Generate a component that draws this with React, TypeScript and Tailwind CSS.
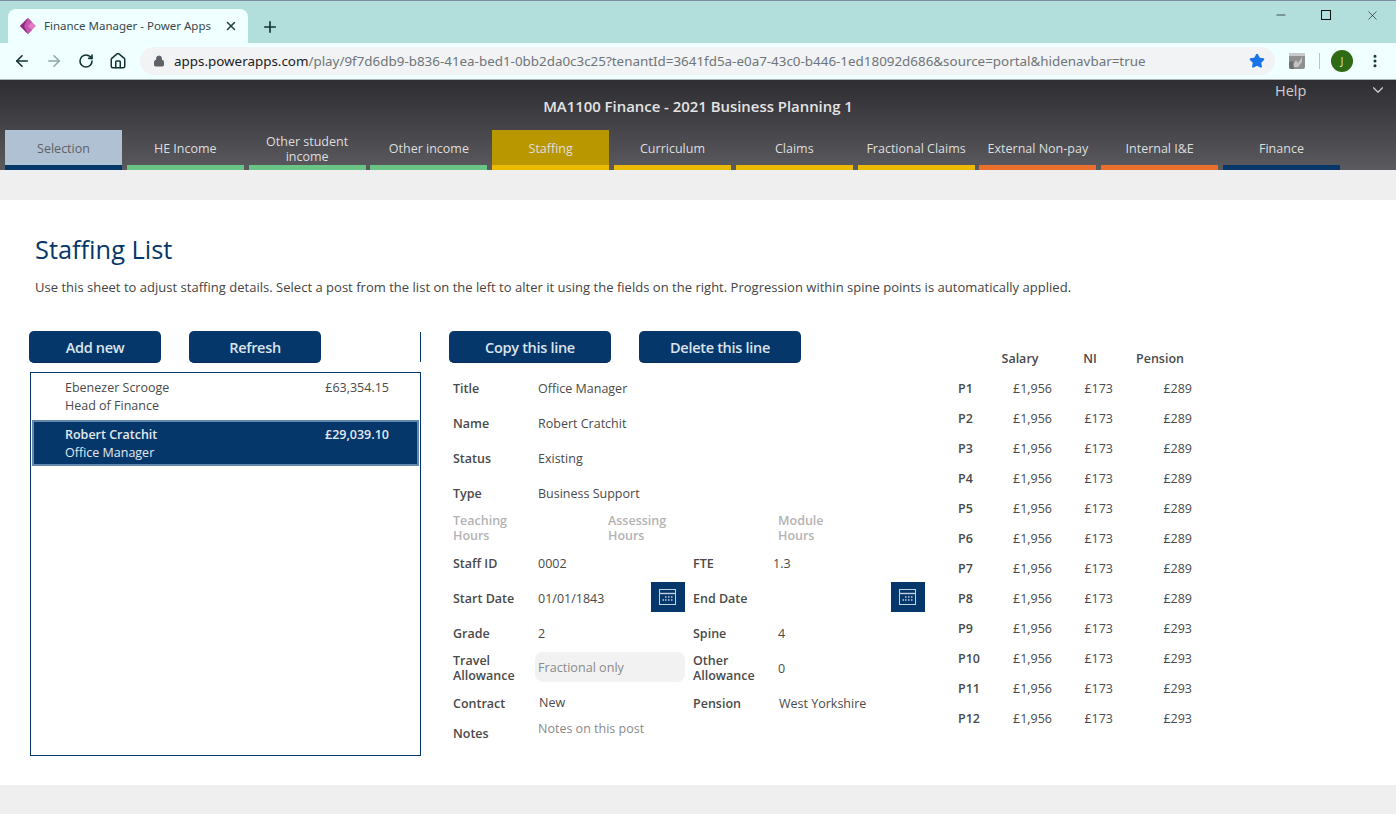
import { ArrowLeft, ArrowRight, ChevronDown, Home, Lock, Minus, MoreVertical, Plus, RotateCw, Star, X } from 'lucide-react';

const tabs = [
  { label: 'Selection', bg: 'bg-[#b0c1d3]', bar: 'bg-[#06376a]', text: 'text-[#5d6266]' },
  { label: 'HE Income', bar: 'bg-[#68c585]' },
  { label: 'Other student income', bar: 'bg-[#68c585]' },
  { label: 'Other income', bar: 'bg-[#68c585]' },
  { label: 'Staffing', bg: 'bg-[#b99700]', bar: 'bg-[#eabb00]' },
  { label: 'Curriculum', bar: 'bg-[#eabb00]' },
  { label: 'Claims', bar: 'bg-[#eabb00]' },
  { label: 'Fractional Claims', bar: 'bg-[#eabb00]' },
  { label: 'External Non-pay', bar: 'bg-[#ea6f2d]' },
  { label: 'Internal I&E', bar: 'bg-[#ea6f2d]' },
  { label: 'Finance', bar: 'bg-[#06376a]' },
];

const months = [
  ['P1', '£289'], ['P2', '£289'], ['P3', '£289'], ['P4', '£289'],
  ['P5', '£289'], ['P6', '£289'], ['P7', '£289'], ['P8', '£289'],
  ['P9', '£293'], ['P10', '£293'], ['P11', '£293'], ['P12', '£293'],
];

function PowerAppsLogo() {
  return (
    <svg width="18" height="18" viewBox="0 0 18 18">
      <path d="M9 1 L17 9 L9 17 L5 13 L9 9 L5 5 Z" fill="#e47cc6" />
      <path d="M9 1 L13 5 L9 9 L13 13 L9 17 L1 9 Z" fill="#c257ab" />
      <path d="M9 1 L1 9 L9 17 L5 9 Z" fill="#8a2a80" />
    </svg>
  );
}

function ExtensionIcon() {
  return (
    <svg width="16" height="16" viewBox="0 0 16 16" className="rounded-[2px]">
      <rect width="16" height="16" fill="#8f8f8f" />
      <rect width="16" height="3" fill="#c9c9c9" />
      <path d="M3 14 L7 7 L9 10 L13 4 L13 9 L9 14 Z" fill="#c4c4c4" />
      <path d="M0 9 L4 8 L5 16 L0 16 Z" fill="#6f6f6f" />
    </svg>
  );
}

function CalendarButton() {
  return (
    <div className="w-[34px] h-[30px] bg-[#06376a] flex items-center justify-center">
      <svg width="18" height="16" viewBox="0 0 18 16" fill="none" stroke="#c4d2e0">
        <rect x="0.5" y="0.5" width="16" height="15" />
        <path d="M0.5 4.5 H16.5" strokeWidth="1.4" />
        <path d="M6 8 h1.5 M9 8 h1.5 M12 8 h1.5 M3.5 11 h1.5 M6 11 h1.5 M9 11 h1.5 M12 11 h1.5" strokeWidth="1.4" />
      </svg>
    </div>
  );
}

function ActionButton({ label, wide }: { label: string; wide?: boolean }) {
  return (
    <button className={`${wide ? 'w-[162px]' : 'w-[132px]'} h-8 pt-[2px] rounded-[5px] bg-[#06376a] border-b border-[#042c56] text-[#dbe3ec] text-[14.5px] font-semibold tracking-[-0.3px]`}>
      {label}
    </button>
  );
}

function Label({ children }: { children: React.ReactNode }) {
  return <div className="text-[12.5px] leading-[15px] font-semibold text-[#4a4a4a]">{children}</div>;
}

function Value({ children, className = '' }: { children: React.ReactNode; className?: string }) {
  return <div className={`text-[12.5px] leading-[15px] text-[#4a4a4a] ${className}`}>{children}</div>;
}

function FormRow({ children, className = 'h-[35px]' }: { children: React.ReactNode; className?: string }) {
  return <div className={`grid grid-cols-[85px_155px_85px_1fr] items-center ${className}`}>{children}</div>;
}

export default function App() {
  return (
    <div className="w-[1396px] h-[814px] overflow-hidden bg-[#efefef] font-['Open_Sans','Noto_Sans',sans-serif]">
      {/* browser chrome */}
      <div className="h-[43px] bg-[#b2dfdc] border-t border-[#7f8fa0] flex items-end pl-2">
        <div className="w-[240px] h-[34px] bg-[#f0ffff] rounded-t-lg flex items-center pl-[11px] pr-[10px]">
          <PowerAppsLogo />
          <span className="ml-[7px] flex-1 text-[11.5px] text-[#38484a] font-['Noto_Sans',sans-serif] whitespace-nowrap">Finance Manager - Power Apps</span>
          <X size={14} strokeWidth={2.5} className="text-[#20403f]" />
        </div>
        <Plus size={18} strokeWidth={2.2} className="ml-[13px] mb-[7px] text-[#123534]" />
        <div className="ml-auto flex items-center h-[28px] self-start text-[#111]">
          <Minus size={14} strokeWidth={1.2} className="mr-[33px]" />
          <div className="w-[10px] h-[10px] border border-[#111] mr-[34px]" />
          <X size={15} strokeWidth={1} className="mr-[16px]" />
        </div>
      </div>
      <div className="h-[37px] bg-[#f0ffff] border-b border-[#aab5b5] flex items-center pl-[13px]">
        <ArrowLeft size={18} strokeWidth={2.2} className="text-[#123534]" />
        <ArrowRight size={18} strokeWidth={2} className="ml-[14px] text-[#8fa5a4]" />
        <RotateCw size={16} strokeWidth={2.4} className="ml-[15px] text-[#123534]" />
        <Home size={18} strokeWidth={2} className="ml-[15px] text-[#123534]" />
        <div className="ml-[13px] w-[1135px] h-7 rounded-full bg-[#f1f3f4] flex items-center pl-[13px] pr-[10px]">
          <Lock size={12} fill="#5f6368" className="text-[#5f6368]" />
          <span className="ml-[9px] flex-1 text-[13.4px] text-[#70757a] font-['Noto_Sans',sans-serif] whitespace-nowrap">
            <span className="text-[#202124]">apps.powerapps.com</span>/play/9f7d6db9-b836-41ea-bed1-0bb2da0c3c25?tenantId=3641fd5a-e0a7-43c0-b446-1ed18092d686&amp;source=portal&amp;hidenavbar=true
          </span>
          <Star size={16} fill="#1a73e8" className="text-[#1a73e8]" />
        </div>
        <div className="ml-[14px]"><ExtensionIcon /></div>
        <div className="ml-[14px] w-px h-4 bg-[#b6c4c4]" />
        <div className="ml-[11px] w-[22px] h-[22px] rounded-full bg-[#2f6b14] text-[#cfe3c4] text-[11px] flex items-center justify-center">J</div>
        <MoreVertical size={16} strokeWidth={2.6} className="ml-[14px] text-[#123534]" />
      </div>

      {/* app header */}
      <div className="relative h-[90px] bg-gradient-to-b from-[#2e2d32] to-[#5b5a5f]">
        <div className="pt-[16px] h-[50px] text-center text-[14.9px] leading-5 font-semibold text-[#e4e4e4]">MA1100 Finance - 2021 Business Planning 1</div>
        <div className="absolute left-[1275px] top-0 text-[14.5px] text-[#cfcfcf]">Help</div>
        <ChevronDown size={18} strokeWidth={1.5} className="absolute left-[1369px] top-[1px] text-[#d5d5d5]" />
        <div className="flex gap-[4.8px] pl-[5px]">
          {tabs.map((t) => (
            <div key={t.label} className={`w-[117px] h-10 flex flex-col ${t.bg ?? ''}`}>
              <div className={`flex-1 flex items-center justify-center text-center text-[12.5px] leading-[15px] px-1 pt-[2px] ${t.text ?? 'text-[#dedede]'}`}>
                {t.label}
              </div>
              <div className={`h-[5px] ${t.bar}`} />
            </div>
          ))}
        </div>
      </div>
      <div className="h-[30px]" />

      {/* page */}
      <div className="h-[585px] bg-white">
        <div className="pl-[35px] pt-[32px] h-[131px]">
          <h1 className="text-[25.4px] leading-[34px] text-[#06376a]">Staffing List</h1>
          <p className="mt-[11px] text-[13px] leading-[20px] text-[#444] tracking-[0.02px] whitespace-nowrap">
            Use this sheet to adjust staffing details. Select a post from the list on the left to alter it using the fields on the right. Progression within spine points is automatically applied.
          </p>
        </div>

        <div className="flex">
          {/* post list */}
          <div className="ml-[29px] w-[392px]">
            <div className="flex h-[41px] items-start gap-7 relative">
              <ActionButton label="Add new" />
              <ActionButton label="Refresh" />
              <div className="absolute right-0 top-[1px] w-px h-[30px] bg-[#06376a]" />
            </div>
            <div className="ml-px h-[384px] border border-[#06376a] text-[12.5px] leading-[18px]">
              <div className="h-[47px] pl-[34px] pr-[31px] pt-[6px] flex justify-between text-[#4a4a4a]">
                <div>
                  <div>Ebenezer Scrooge</div>
                  <div>Head of Finance</div>
                </div>
                <div>£63,354.15</div>
              </div>
              <div className="h-[46px] mx-px pl-[31px] pr-[28px] pt-[4px] flex justify-between bg-[#06376a] border-2 border-[#6487ac] text-[#e3e9f0]">
                <div>
                  <div className="font-semibold">Robert Cratchit</div>
                  <div>Office Manager</div>
                </div>
                <div className="font-semibold">£29,039.10</div>
              </div>
            </div>
          </div>

          {/* post details */}
          <div className="ml-[28px] w-[510px]">
            <div className="flex h-[40px] items-start gap-7">
              <ActionButton label="Copy this line" wide />
              <ActionButton label="Delete this line" wide />
            </div>
            <div className="pl-1">
              <FormRow><Label>Title</Label><Value>Office Manager</Value></FormRow>
              <FormRow><Label>Name</Label><Value>Robert Cratchit</Value></FormRow>
              <FormRow><Label>Status</Label><Value>Existing</Value></FormRow>
              <FormRow><Label>Type</Label><Value>Business Support</Value></FormRow>
              <div className="flex h-[35px] pb-[2px] items-center text-[12.5px] leading-[15px] font-semibold text-[#b3b3b3]">
                <div className="w-[155px]">Teaching<br />Hours</div>
                <div className="w-[170px]">Assessing<br />Hours</div>
                <div>Module<br />Hours</div>
              </div>
              <FormRow><Label>Staff ID</Label><Value>0002</Value><Label>FTE</Label><Value className="-ml-[5px]">1.3</Value></FormRow>
              <FormRow>
                <Label>Start Date</Label>
                <div className="w-[147px] self-start mt-px flex items-center justify-between"><Value className="mt-[2px]">01/01/1843</Value><CalendarButton /></div>
                <Label>End Date</Label>
                <div className="flex justify-end w-[147px] self-start mt-px"><CalendarButton /></div>
              </FormRow>
              <FormRow><Label>Grade</Label><Value>2</Value><Label>Spine</Label><Value>4</Value></FormRow>
              <FormRow>
                <div className="-mt-[2px]"><Label>Travel<br />Allowance</Label></div>
                <div className="-ml-[3px] w-[150px] h-[30px] self-start mt-px rounded-lg bg-[#f2f2f2] pl-[3px] pt-[2px] flex items-center text-[12.6px] text-[#8a8a8a]">Fractional only</div>
                <div className="-mt-[2px]"><Label>Other<br />Allowance</Label></div>
                <Value>0</Value>
              </FormRow>
              <FormRow><Label>Contract</Label><Value className="ml-px -mt-[2px]">New</Value><Label>Pension</Label><Value className="ml-px">West Yorkshire</Value></FormRow>
              <FormRow className="h-[25px]"><Label>Notes</Label><Value className="-mt-[10px] text-[#8a8a8a]">Notes on this post</Value></FormRow>
            </div>
          </div>

          {/* monthly split */}
          <div className="-ml-px -mt-[2px] w-[240px] text-[12.5px] text-[#4a4a4a]">
            <div className="flex h-[45px] pt-[22px] text-[#4a4a4a] font-semibold leading-[15px] text-[12.5px]">
              <div className="w-[41px]" />
              <div className="w-[42px] text-center">Salary</div>
              <div className="w-[14px] ml-[42px] text-center">NI</div>
              <div className="ml-[39px]">Pension</div>
            </div>
            {months.map(([p, pension]) => (
              <div key={p} className="flex h-[30px] items-center">
                <div className="w-[50px] font-semibold text-[#4a4a4a]">{p}</div>
                <div className="w-[44px] text-right">£1,956</div>
                <div className="w-[61px] text-right">£173</div>
                <div className="w-[79px] text-right">{pension}</div>
              </div>
            ))}
          </div>
        </div>
      </div>
    </div>
  );
}
